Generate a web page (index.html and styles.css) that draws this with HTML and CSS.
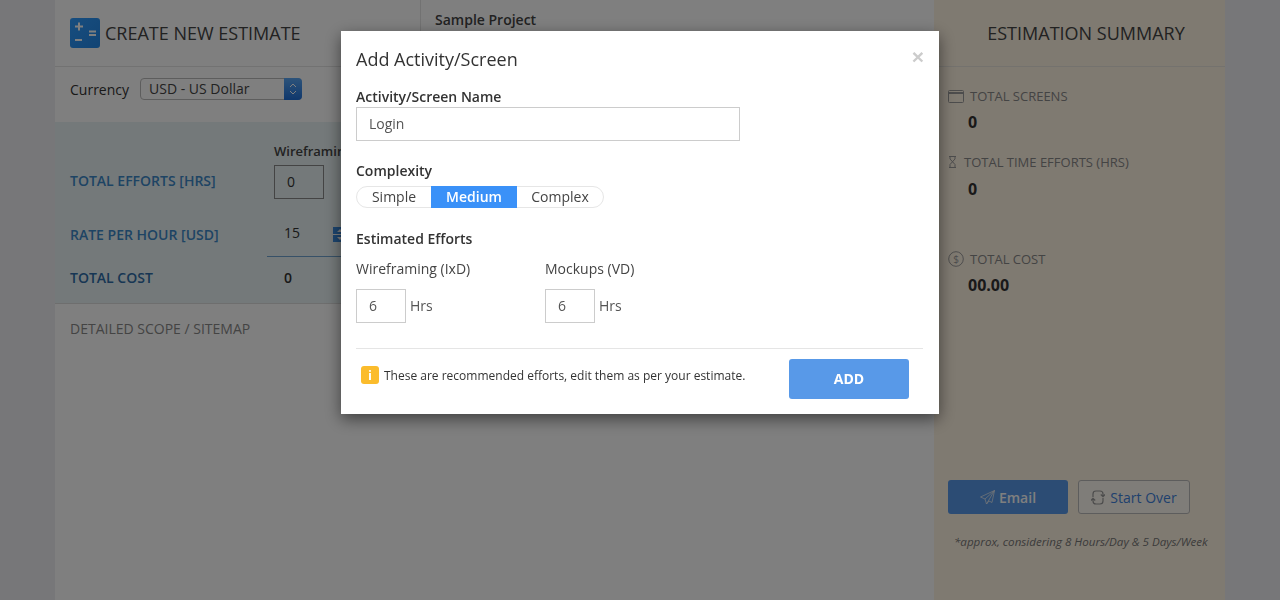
FILE: index.html
```html
<!DOCTYPE html>
<html lang="en">
<head>
<meta charset="utf-8">
<title>Create New Estimate</title>
<link rel="stylesheet" href="styles.css">
</head>
<body>
<div class="app">
  <main class="main">
    <header class="top">
      <div class="title">
        <svg class="calc" width="30" height="30" viewBox="0 0 30 30"><defs><linearGradient id="cg" x1="0" y1="0" x2="1" y2="1"><stop offset="0" stop-color="#2f9cff"/><stop offset="1" stop-color="#2488e8"/></linearGradient></defs><rect width="30" height="30" rx="3" fill="url(#cg)"/><path d="M5 8.500h8M9 4.500v8M5 22h7M19 13.500h7M19 17h7" stroke="#fff" stroke-width="2" fill="none"/></svg>
        <h1>CREATE NEW ESTIMATE</h1>
      </div>
      <div class="project">Sample Project</div>
    </header>
    <div class="currency">
      <span>Currency</span>
      <div class="select"><span class="select-text">USD - US Dollar</span><span class="select-arrows"><svg width="8" height="14" viewBox="0 0 8 14"><path d="M1 5l3-3 3 3M1 9l3 3 3-3" stroke="#fff" fill="none"/></svg></span></div>
    </div>
    <section class="band">
      <div class="band-row first">
        <div class="band-label">TOTAL EFFORTS [HRS]</div>
        <div class="band-col"><div class="col-head">Wireframing (IxD)</div><div class="box">0</div></div>
      </div>
      <div class="band-row rate">
        <div class="band-label">RATE PER HOUR [USD]</div>
        <div class="band-val">15<svg class="spin" width="14" height="15" viewBox="0 0 14 15"><rect width="14" height="15" fill="#3a8ce0"/><path d="M0 7.500h14" stroke="#fff"/><path d="M7 2l3 3H4zM7 13l3-3H4z" fill="#fff"/></svg></div>
      </div>
      <div class="band-row cost">
        <div class="band-label dark">TOTAL COST</div>
        <div class="band-val strong">0</div>
      </div>
    </section>
    <div class="scope">DETAILED SCOPE / SITEMAP</div>
  </main>
  <aside class="summary">
    <h2>ESTIMATION SUMMARY</h2>
    <div class="stats">
      <div class="stat">
        <div class="stat-label"><svg width="16" height="13" viewBox="0 0 16 13"><rect x=".5" y=".5" width="15" height="12" rx="1" fill="none" stroke="#9a9a9a"/><path d="M1 3h14" stroke="#9a9a9a" stroke-width="2"/></svg><span class="gap6">TOTAL SCREENS</span></div>
        <div class="stat-val">0</div>
      </div>
      <div class="stat stat-time">
        <div class="stat-label"><svg width="9" height="12" viewBox="0 0 9 12"><path d="M1 .5h7M1 11.500h7M2 1v2l5 5.500V11M7 1v2L2 8.500V11" stroke="#9a9a9a" fill="none"/></svg><span class="gap7">TOTAL TIME EFFORTS (HRS)</span></div>
        <div class="stat-val">0</div>
      </div>
      <div class="stat cost-stat">
        <div class="stat-label"><svg width="16" height="16" viewBox="0 0 16 16"><circle cx="8" cy="8" r="7.300" fill="none" stroke="#9a9a9a"/><text x="8" y="11.500" text-anchor="middle" class="dollar">$</text></svg><span class="gap6">TOTAL COST</span></div>
        <div class="stat-val">00.00</div>
      </div>
    </div>
    <div class="actions">
      <button class="btn-email" type="button"><svg width="15" height="15" viewBox="0 0 15 15"><path d="M14.500.500L.500 7l4.500 2 1.500 5 2.500-3 3 1.500zM14.500.500L5 9M14.500.500L6.500 14" fill="none" stroke="#e2e8f0" stroke-width=".8"/></svg>Email</button>
      <button class="btn-over" type="button"><svg width="14" height="17" viewBox="0 0 14 17"><path d="M2 8V5Q2 2 5 2H9Q12 2 12 5V7.500M9.800 5.500L12 7.700 14 5.500M12 9V12Q12 15 9 15H5Q2 15 2 12V9.500M0 11.500L2 9.300 4.200 11.500" fill="none" stroke="#999" stroke-width="1.200"/></svg>Start Over</button>
    </div>
    <p class="note">*approx, considering 8 Hours/Day &amp; 5 Days/Week</p>
  </aside>
</div>
<div class="backdrop">
  <div class="modal" role="dialog">
    <span class="close">×</span>
    <h3>Add Activity/Screen</h3>
    <label class="lbl">Activity/Screen Name</label>
    <div class="name-input">Login</div>
    <div class="lbl complexity">Complexity</div>
    <div class="segments"><span class="seg seg-simple">Simple</span><span class="seg seg-on">Medium</span><span class="seg seg-complex">Complex</span></div>
    <div class="lbl efforts">Estimated Efforts</div>
    <div class="effort-cols">
      <div class="effort"><div class="effort-head">Wireframing (IxD)</div><div class="effort-row"><span class="small-input">6</span><span class="unit">Hrs</span></div></div>
      <div class="effort"><div class="effort-head">Mockups (VD)</div><div class="effort-row"><span class="small-input">6</span><span class="unit">Hrs</span></div></div>
    </div>
    <div class="modal-foot">
      <div class="hint"><span class="hint-icon">i</span>These are recommended efforts, edit them as per your estimate.</div>
      <button class="btn-add" type="button">ADD</button>
    </div>
  </div>
</div>
</body>
</html>
```
FILE: styles.css
```css
* { box-sizing: border-box; }
html, body { margin: 0; height: 100%; overflow: hidden; }
body { background: #eeeff2; font-family: "Open Sans", sans-serif; font-size: 14px; color: #333; }
button { font-family: inherit; }
.app { display: grid; grid-template-columns: 879px 291px; width: 1170px; height: 600px; margin-left: 55px; }
.main { background: #fff; }
.top { display: flex; height: 67px; border-bottom: 1px solid #e4e4e4; }
.title { width: 366px; display: flex; align-items: center; padding-left: 15px; border-right: 1px solid #e4e4e4; height: 66px; }
.calc { flex: none; }
h1 { margin: 0 0 0 5px; font-size: 18px; font-weight: 400; color: #444; white-space: nowrap; }
.project { padding: 10px 0 0 14px; font-weight: 600; color: #444; }
.currency { display: flex; align-items: center; height: 55px; padding: 0 0 11px 15px; gap: 11px; }
.select { display: flex; width: 162px; height: 22px; border: 1px solid #bbb; border-radius: 4px; background: #fff; }
.select-text { flex: 1; padding-left: 8px; line-height: 20px; color: #444; }
.select-arrows { width: 18px; margin: -1px; border-radius: 0 4px 4px 0; background: linear-gradient(#5aa7f5, #1f6fd8); display: flex; align-items: center; justify-content: center; }
.band { height: 182px; background: #e9f3f4; border-bottom: 1px solid #ddd; padding-left: 15px; }
.band-row { display: flex; align-items: center; }
.first { height: 91px; align-items: flex-start; }
.first .band-label { margin-top: 49px; }
.band-label { width: 197px; font-weight: 600; color: #3d88c8; white-space: nowrap; }
.band-label.dark { color: #2f6da8; }
.band-col { padding: 20px 0 0 7px; }
.col-head { font-size: 13px; font-weight: 600; color: #444; white-space: nowrap; height: 23px; }
.box { width: 50px; height: 34px; border: 1px solid #888; padding-left: 12px; line-height: 32px; }
.rate { height: 44px; align-items: stretch; }
.rate .band-label { align-self: center; padding-bottom: 2px; }
.cost { height: 45px; padding-bottom: 5px; }
.band-val { padding-left: 17px; width: 150px; }
.rate .band-val { line-height: 40px; border-bottom: 1px solid #6fa3d0; }
.strong { font-weight: 600; color: #333; }
.spin { margin-left: 33px; vertical-align: middle; }
.scope { padding: 15px 0 0 15px; color: #888; }
.summary { background: #fff4e3; display: flex; flex-direction: column; }
.summary h2 { margin: 0; height: 67px; line-height: 66px; font-size: 18px; font-weight: 400; text-align: center; color: #444; border-bottom: 1px solid #e8e4dc; padding-left: 13px; }
.stats { padding: 20px 0 0 14px; height: 413px; }
.stat { height: 66px; }
.stat-label { display: flex; align-items: center; color: #888; font-size: 13px; height: 18px; }
.gap6 { margin-left: 6px; }
.gap7 { margin-left: 7px; }
.stat-val { margin: 6px 0 0 20px; font-size: 16px; font-weight: 700; color: #333; }
.stat-time .stat-val { margin-top: 7px; }
.cost-stat { margin-top: 31px; }
.dollar { font-size: 10px; fill: #9a9a9a; font-family: "Open Sans", sans-serif; }
.actions { display: flex; gap: 10px; padding-left: 14px; }
.actions button { height: 34px; border-radius: 3px; font-size: 14px; display: flex; align-items: center; justify-content: center; gap: 4px; padding: 0; }
.btn-email { width: 120px; background: #5899e8; border: 0; color: #fff; font-weight: 600; }
.actions .btn-over { width: 112px; gap: 5px; background: #fffaf2; border: 1px solid #bbb; color: #3f82dc; }
.note { margin: 20px 0 0 20px; font-size: 11.600px; font-style: italic; color: #777; white-space: nowrap; }
.backdrop { position: fixed; inset: 0; background: rgba(0, 0, 0, .5); }
.modal { position: relative; width: 598px; height: 383px; margin: 31px 0 0 341px; padding: 15px 16px 0 15px; background: #fff; box-shadow: 0 5px 15px rgba(0, 0, 0, .5); }
.close { position: absolute; top: 15px; right: 15px; font-size: 21px; line-height: 1; font-weight: 700; color: #ccc; font-family: "Liberation Sans", sans-serif; }
h3 { margin: 0; font-size: 18px; line-height: 27px; font-weight: 400; color: #333; }
.lbl { display: block; font-weight: 600; color: #333; line-height: 19px; }
h3 + .lbl { margin-top: 14px; }
.name-input { width: 384px; height: 34px; border: 1px solid #ccc; padding-left: 12px; line-height: 32px; color: #555; margin-top: 1px; }
.complexity { margin-top: 20px; }
.segments { display: flex; width: 248px; height: 22px; margin-top: 6px; border: 1px solid #e6e6e6; border-radius: 11px; line-height: 20px; color: #444; }
.seg { text-align: center; }
.seg-simple { width: 74px; }
.seg-on { width: 86px; margin: -1px 0; height: 22px; line-height: 22px; background: #3a91f8; color: #fff; font-weight: 600; }
.seg-complex { flex: 1; }
.efforts { margin-top: 21px; }
.effort-cols { display: flex; margin-top: 11px; }
.effort { width: 189px; }
.effort-head { line-height: 19px; color: #444; }
.effort-row { display: flex; align-items: center; gap: 4px; margin-top: 11px; color: #555; }
.unit { padding-bottom: 2px; }
.small-input { width: 50px; height: 34px; border: 1px solid #ccc; padding-left: 12px; line-height: 32px; }
.modal-foot { display: flex; align-items: flex-start; justify-content: space-between; margin: 25px 0 0; padding: 10px 14px 0 5px; border-top: 1px solid #e5e5e5; }
.hint { display: flex; align-items: center; font-size: 12px; color: #333; height: 32px; }
.hint-icon { width: 18px; height: 18px; margin-right: 5px; border-radius: 3px; background: #fbbc2c; color: #fff; text-align: center; line-height: 18px; font-weight: 700; font-size: 13px; }
.btn-add { width: 120px; height: 40px; border: 0; border-radius: 3px; padding: 0 0 2px; background: #5899e8; color: #fff; font-size: 14px; font-weight: 700; }
```
